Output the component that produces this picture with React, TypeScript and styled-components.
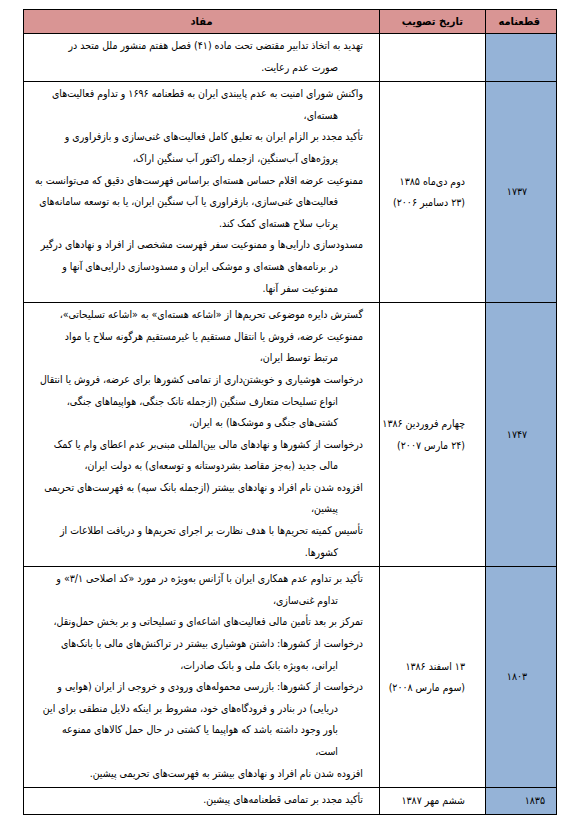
import styled, { createGlobalStyle } from 'styled-components';

const GlobalStyle = createGlobalStyle`
  html, body {
    margin: 0;
    padding: 0;
    background: #fff;
  }
  body {
    font-family: "DejaVu Sans Condensed", "DejaVu Sans", sans-serif;
    font-stretch: condensed;
    color: #000;
  }
`;

const Page = styled.div`
  padding: 9px 16px 12px 23px;
`;

const Table = styled.table`
  width: 533px;
  border-collapse: collapse;
  table-layout: fixed;
  font-size: 10.5px;
  line-height: 21.5px;
  border: 1px solid #000;
`;

const HeadCell = styled.th<{ $align?: 'right' | 'center'; $pad?: number }>`
  background: #d99594;
  border: 1px solid #000;
  height: 23px;
  padding: 0 ${({ $pad }) => $pad ?? 0}px 0 0;
  font-weight: 700;
  font-size: 11px;
  text-align: ${({ $align }) => $align ?? 'right'};
  vertical-align: middle;
`;

const ContentCell = styled.td`
  border: 1px solid #000;
  padding: 1px 16px 3px 4px;
  vertical-align: top;
  overflow: hidden;
`;

const DateCell = styled.td`
  border: 1px solid #000;
  padding: 2px 20px 2px 2px;
  vertical-align: middle;
  text-align: right;
`;

const NumberCell = styled.td<{ $align: 'right' | 'center' }>`
  background: #95b3d7;
  border: 1px solid #000;
  padding: 2px ${({ $align }) => ($align === 'right' ? 11 : 8)}px 2px 0;
  vertical-align: middle;
  text-align: ${({ $align }) => $align};
`;

const Line = styled.div<{ $cont?: boolean }>`
  height: 21.6px;
  white-space: nowrap;
  text-align: right;
  padding-right: ${({ $cont }) => ($cont ? 25 : 0)}px;
`;

type Row = {
  number: string;
  align: 'right' | 'center';
  date: string[];
  items: string[][];
};

const rows: Row[] = [
  {
    number: '',
    align: 'center',
    date: [],
    items: [['تهدید به اتخاذ تدابیر مقتضی تحت ماده (۴۱) فصل هفتم منشور ملل متحد در', 'صورت عدم رعایت.']],
  },
  {
    number: '۱۷۳۷',
    align: 'center',
    date: ['دوم دی‌ماه ۱۳۸۵', '(۲۳ دسامبر ۲۰۰۶)'],
    items: [
      ['واکنش شورای امنیت به عدم پایبندی ایران به قطعنامه ۱۶۹۶ و تداوم فعالیت‌های', 'هسته‌ای،'],
      ['تأکید مجدد بر الزام ایران به تعلیق کامل فعالیت‌های غنی‌سازی و بازفراوری و', 'پروژه‌های آب‌سنگین، ازجمله راکتور آب سنگین اراک،'],
      [
        'ممنوعیت عرضه اقلام حساس هسته‌ای براساس فهرست‌های دقیق که می‌توانست به',
        'فعالیت‌های غنی‌سازی، بازفراوری یا آب سنگین ایران، یا به توسعه سامانه‌های',
        'پرتاب سلاح هسته‌ای کمک کند.',
      ],
      [
        'مسدودسازی دارایی‌ها و ممنوعیت سفر فهرست مشخصی از افراد و نهادهای درگیر',
        'در برنامه‌های هسته‌ای و موشکی ایران و مسدودسازی دارایی‌های آنها و',
        'ممنوعیت سفر آنها.',
      ],
    ],
  },
  {
    number: '۱۷۴۷',
    align: 'center',
    date: ['چهارم فروردین ۱۳۸۶', '(۲۴ مارس ۲۰۰۷)'],
    items: [
      ['گسترش دایره موضوعی تحریم‌ها از «اشاعه هسته‌ای» به «اشاعه تسلیحاتی»،'],
      ['ممنوعیت عرضه، فروش یا انتقال مستقیم یا غیرمستقیم هرگونه سلاح یا مواد', 'مرتبط توسط ایران،'],
      [
        'درخواست هوشیاری و خویشتن‌داری از تمامی کشورها برای عرضه، فروش یا انتقال',
        'انواع تسلیحات متعارف سنگین (ازجمله تانک جنگی، هواپیماهای جنگی،',
        'کشتی‌های جنگی و موشک‌ها) به ایران،',
      ],
      [
        'درخواست از کشورها و نهادهای مالی بین‌المللی مبنی‌بر عدم اعطای وام یا کمک',
        'مالی جدید (به‌جز مقاصد بشردوستانه و توسعه‌ای) به دولت ایران،',
      ],
      ['افزوده شدن نام افراد و نهادهای بیشتر (ازجمله بانک سپه) به فهرست‌های تحریمی', 'پیشین،'],
      ['تأسیس کمیته تحریم‌ها با هدف نظارت بر اجرای تحریم‌ها و دریافت اطلاعات از', 'کشورها.'],
    ],
  },
  {
    number: '۱۸۰۳',
    align: 'center',
    date: ['۱۳ اسفند ۱۳۸۶', '(سوم مارس ۲۰۰۸)'],
    items: [
      ['تأکید بر تداوم عدم همکاری ایران با آژانس به‌ویژه در مورد «کد اصلاحی ۳/۱» و', 'تداوم غنی‌سازی،'],
      ['تمرکز بر بعد تأمین مالی فعالیت‌های اشاعه‌ای و تسلیحاتی و بر بخش حمل‌ونقل،'],
      ['درخواست از کشورها: داشتن هوشیاری بیشتر در تراکنش‌های مالی با بانک‌های', 'ایرانی، به‌ویژه بانک ملی و بانک صادرات،'],
      [
        'درخواست از کشورها: بازرسی محموله‌های ورودی و خروجی از ایران (هوایی و',
        'دریایی) در بنادر و فرودگاه‌های خود، مشروط بر اینکه دلایل منطقی برای این',
        'باور وجود داشته باشد که هواپیما یا کشتی در حال حمل کالاهای ممنوعه',
        'است،',
      ],
      ['افزوده شدن نام افراد و نهادهای بیشتر به فهرست‌های تحریمی پیشین.'],
    ],
  },
  {
    number: '۱۸۳۵',
    align: 'right',
    date: ['ششم مهر ۱۳۸۷'],
    items: [['تأکید مجدد بر تمامی قطعنامه‌های پیشین.']],
  },
];

export default function App() {
  return (
    <Page>
      <GlobalStyle />
      <Table dir="rtl">
        <colgroup>
          <col style={{ width: 71 }} />
          <col style={{ width: 106 }} />
          <col style={{ width: 356 }} />
        </colgroup>
        <thead>
          <tr>
            <HeadCell $pad={16}>قطعنامه</HeadCell>
            <HeadCell $pad={22}>تاریخ تصویب</HeadCell>
            <HeadCell $align="center">مفاد</HeadCell>
          </tr>
        </thead>
        <tbody>
          {rows.map((row, r) => (
            <tr key={r}>
              <NumberCell $align={row.align}>{row.number}</NumberCell>
              <DateCell>
                {row.date.map((d, i) => (
                  <Line key={i}>{d}</Line>
                ))}
              </DateCell>
              <ContentCell>
                {row.items.map((item, i) =>
                  item.map((text, j) => (
                    <Line key={`${i}-${j}`} $cont={j > 0}>
                      {text}
                    </Line>
                  )),
                )}
              </ContentCell>
            </tr>
          ))}
        </tbody>
      </Table>
    </Page>
  );
}
